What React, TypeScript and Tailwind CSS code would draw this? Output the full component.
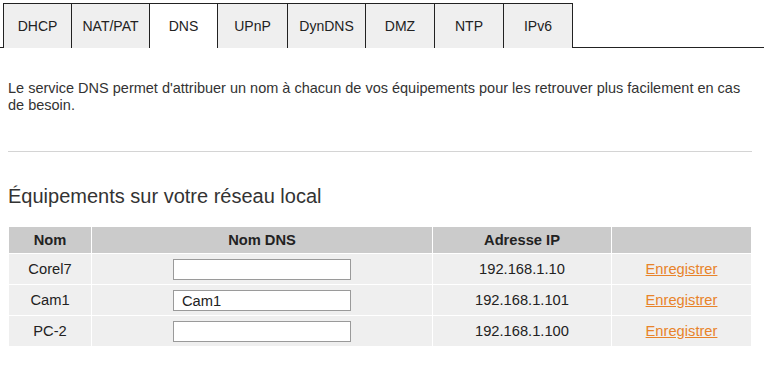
import React from "react";

const tabs = [
  { label: "DHCP", w: "w-[68px]" },
  { label: "NAT/PAT", w: "w-[78px]" },
  { label: "DNS", w: "w-[68px]", active: true },
  { label: "UPnP", w: "w-[70px]" },
  { label: "DynDNS", w: "w-[78px]" },
  { label: "DMZ", w: "w-[69px]" },
  { label: "NTP", w: "w-[69px]" },
  { label: "IPv6", w: "w-[70px]", last: true },
];

const rows = [
  { nom: "Corel7", dns: "", ip: "192.168.1.10" },
  { nom: "Cam1", dns: "Cam1", ip: "192.168.1.101" },
  { nom: "PC-2", dns: "", ip: "192.168.1.100" },
];

export default function App() {
  return (
    <div
      className="w-[764px] h-[377px] bg-white text-[#333] overflow-hidden"
      style={{ fontFamily: '"Liberation Sans", Arial, sans-serif' }}
    >
      <div className="flex items-end pt-[3px]">
        <div className="w-[3px] h-[45px] border-b border-[#222]" />
        {tabs.map((t) => (
          <div
            key={t.label}
            className={`${t.w} h-[45px] border-t border-l border-[#222] flex items-center justify-center text-[14px] text-[#222] ${
              t.last ? "border-r" : ""
            } ${t.active ? "bg-white" : "bg-[#efefef]"}`}
          >
            {t.label}
          </div>
        ))}
        <div className="flex-1 h-[45px] border-b border-[#222]" />
      </div>

      <p className="mt-[32px] ml-[8px] w-[746px] text-[14.5px] leading-[17px] text-[#333]">
        Le service DNS permet d'attribuer un nom à chacun de vos équipements pour les retrouver plus facilement en cas de besoin.
      </p>

      <div className="ml-[8px] w-[744px] mt-[37px] h-px bg-[#d4d4d4]" />

      <h2 className="mt-[32px] px-[8px] text-[20px] leading-[24px] text-[#333]">
        Équipements sur votre réseau local
      </h2>

      <table className="ml-[8px] mt-[18px] w-[744px] border-separate border-spacing-[1px] text-[14.7px] text-[#222]">
        <thead>
          <tr className="bg-[#cbcbcb] h-[26px]">
            <th className="w-[82px] font-bold">Nom</th>
            <th className="w-[340px] font-bold">Nom DNS</th>
            <th className="w-[178px] font-bold">Adresse IP</th>
            <th className="font-bold"></th>
          </tr>
        </thead>
        <tbody>
          {rows.map((r) => (
            <tr key={r.nom} className="bg-[#efefef] h-[30px]">
              <td className="text-center">{r.nom}</td>
              <td className="text-center">
                <input
                  readOnly
                  value={r.dns}
                  className="w-[178px] h-[21px] border border-[#9a9a9a] bg-white px-[8px] text-[14.7px] text-[#222] align-middle"
                />
              </td>
              <td className="text-center">{r.ip}</td>
              <td className="text-center">
                <a href="#" className="text-[#e8832a] underline">
                  Enregistrer
                </a>
              </td>
            </tr>
          ))}
        </tbody>
      </table>
    </div>
  );
}
